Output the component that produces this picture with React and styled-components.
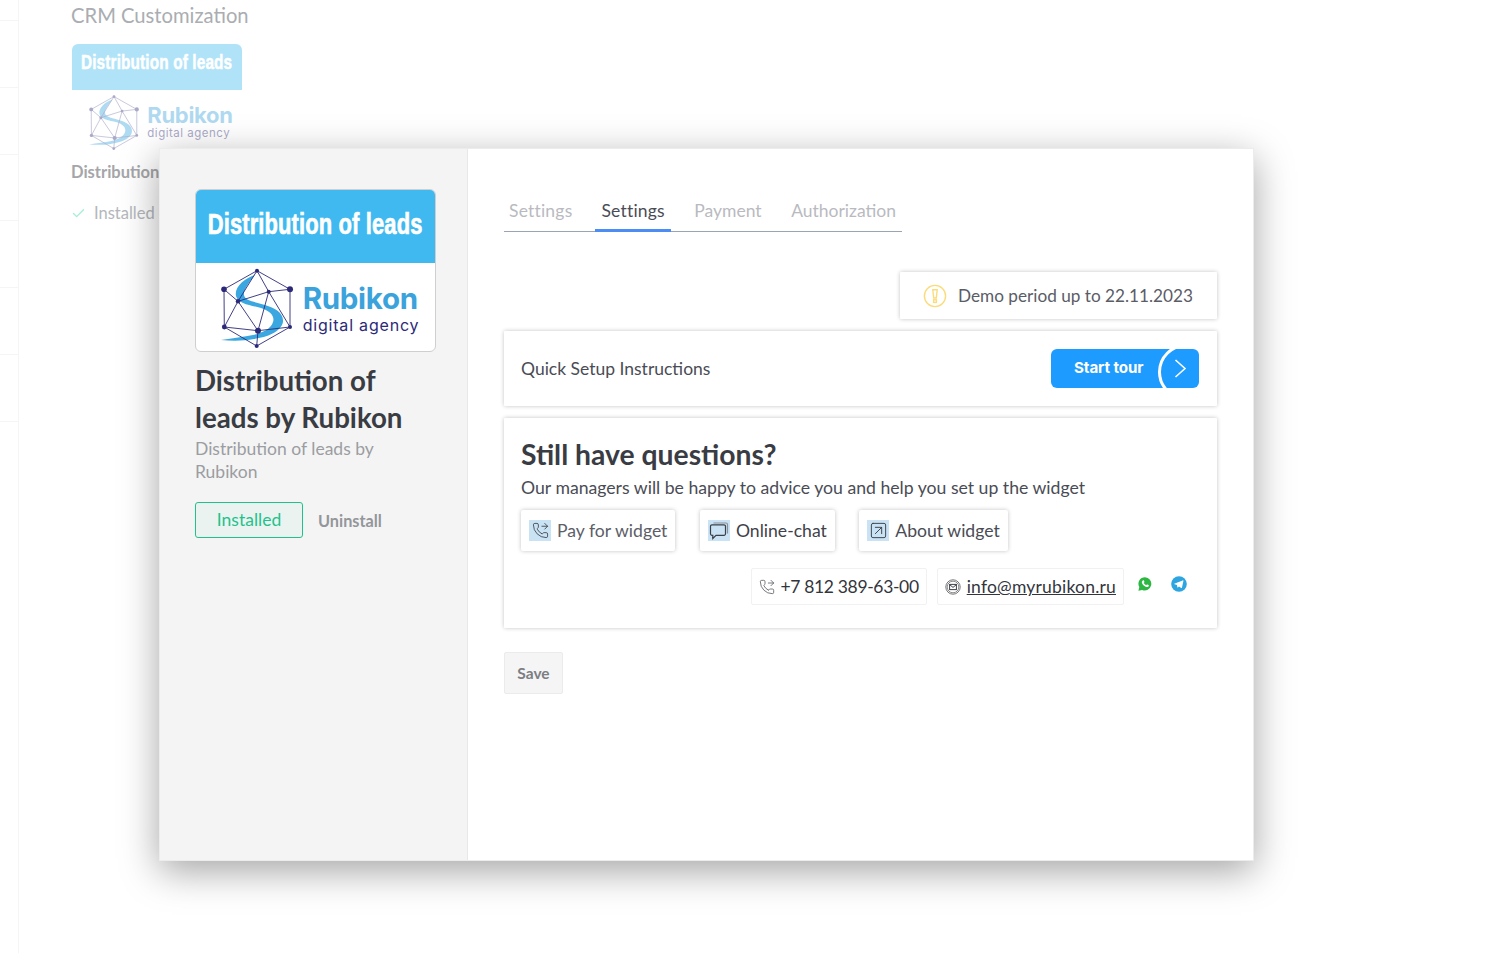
import React from 'react';
import styled, { createGlobalStyle } from 'styled-components';
import { Check, PhoneForwarded, SquareArrowUpRight } from 'lucide-react';

const Global = createGlobalStyle`
  html, body { margin: 0; padding: 0; background: #fff; }
  body { font-family: "Lato", "Noto Sans", sans-serif; color: #4a4c55; overflow: hidden; }
  * { box-sizing: border-box; }
`;

const Page = styled.div`
  position: relative;
  width: 1487px;
  height: 953px;
  display: flex;
  overflow: hidden;
`;

const Rail = styled.div`
  width: 19px;
  height: 100%;
  border-right: 1px solid #f5f5f5;
  padding-top: 20px;
  flex: none;
`;

const RailRow = styled.div`
  height: 66.8px;
  border-top: 1px solid #f5f5f5;
`;

const Backdrop = styled.div`
  padding: 0 0 0 52px;
`;

const PageTitle = styled.h1`
  margin: 2px 0 0;
  font-size: 20.2px;
  font-weight: 400;
  line-height: 26px;
  color: #aaadb2;
`;

const FadedCard = styled.div`
  width: 170px;
  margin: 16px 0 0 1px;
  opacity: 0.4;
`;

const FadedName = styled.div`
  margin-top: 14px;
  font-size: 16.5px;
  font-weight: 700;
  color: #a5a6a9;
  white-space: nowrap;
`;

const FadedStatus = styled.div`
  margin-top: 21px;
  display: flex;
  align-items: center;
  gap: 8px;
  font-size: 16.5px;
  color: #b4b7bc;
  svg { color: #a6eed5; }
`;

const Banner = styled.div`
  height: ${p => p.$h}px;
  padding-bottom: ${p => p.$lift}px;
  background: ${p => p.$bg};
  border-radius: ${p => p.$r}px ${p => p.$r}px 0 0;
  display: flex;
  align-items: center;
  justify-content: center;
  overflow: hidden;
`;

const BannerText = styled.span`
  color: #fff;
  font-family: "Liberation Sans", Arial, sans-serif;
  font-weight: 700;
  font-size: ${p => p.$size}px;
  white-space: nowrap;
  transform: scaleX(0.73);
  -webkit-text-stroke: ${p => p.$stroke}px #fff;
  letter-spacing: 0.2px;
`;

const LogoRow = styled.div`
  display: flex;
  align-items: center;
  justify-content: center;
  gap: ${p => p.$gap}px;
  height: ${p => p.$h}px;
  padding: ${p => p.$top}px 0 0 ${p => p.$left}px;
`;

const LogoWords = styled.div`
  display: flex;
  flex-direction: column;
  gap: ${p => p.$gap}px;
`;

const LogoName = styled.span`
  font-family: "Inter", sans-serif;
  font-weight: 700;
  font-size: ${p => p.$size}px;
  line-height: 0.9;
  color: #3aa3dc;
  letter-spacing: -0.3px;
`;

const LogoTag = styled.span`
  font-family: "Inter", sans-serif;
  font-weight: 400;
  font-size: ${p => p.$size}px;
  line-height: 1;
  letter-spacing: ${p => p.$track}px;
  color: #2c2a78;
  white-space: nowrap;
`;

const Modal = styled.div`
  position: absolute;
  left: 159px;
  top: 148px;
  width: 1095px;
  height: 713px;
  background: #fff;
  display: flex;
  outline: 1px solid #ececec;
  outline-offset: -1px;
  box-shadow: 0 10px 36px rgba(0, 0, 0, 0.36);
`;

const Side = styled.aside`
  width: 309px;
  flex: none;
  background: #f4f4f4;
  border-right: 1px solid #e8e8e8;
  padding: 41px 31px 0 36px;
`;

const WidgetCard = styled.div`
  width: 241px;
  height: 163px;
  background: #fff;
  border: 1px solid #cfcfcf;
  border-radius: 6px;
  overflow: hidden;
`;

const WidgetTitle = styled.h2`
  margin: 10px 0 0;
  font-size: 27.7px;
  font-weight: 700;
  line-height: 37px;
  color: #3a3c44;
`;

const WidgetDesc = styled.p`
  margin: 1px 0 0;
  font-size: 17.5px;
  line-height: 23px;
  color: #9b9da2;
`;

const InstallRow = styled.div`
  margin-top: 19px;
  display: flex;
  align-items: center;
  gap: 15px;
`;

const InstalledBadge = styled.div`
  width: 108px;
  height: 36px;
  border: 1px solid #1fc28c;
  border-radius: 3px;
  background: #ebf3f0;
  color: #1fc28c;
  font-size: 17.5px;
  display: flex;
  align-items: center;
  justify-content: center;
  padding-bottom: 2px;
`;

const Uninstall = styled.span`
  font-size: 16.3px;
  font-weight: 700;
  color: #93969b;
`;

const Main = styled.main`
  flex: 1;
  padding: 40px 37px 0 36px;
`;

const Tabs = styled.div`
  width: 398px;
  height: 44px;
  display: flex;
  gap: 18px;
  border-bottom: 1px solid #9aa4b5;
`;

const Tab = styled.div`
  height: 44px;
  padding: 0 ${p => p.$pad}px;
  font-size: 17.5px;
  line-height: 46px;
  letter-spacing: ${p => p.$track || 0}px;
  white-space: nowrap;
  color: ${p => (p.$active ? '#4a4c55' : '#b9babf')};
  border-bottom: ${p => (p.$active ? '3px solid #4b8cf5' : 'none')};
`;

const DemoRow = styled.div`
  margin-top: 40px;
  display: flex;
  justify-content: flex-end;
`;

const Panel = styled.div`
  background: #fff;
  border-radius: 1px;
  box-shadow: 0 0 4px rgba(0, 0, 0, 0.24);
`;

const DemoBox = styled(Panel)`
  width: 317px;
  height: 47px;
  display: flex;
  align-items: center;
  gap: 11px;
  padding-left: 23px;
  font-size: 17.2px;
  color: #5a5c66;
`;

const SetupBox = styled(Panel)`
  margin-top: 12px;
  height: 75px;
  display: flex;
  align-items: center;
  justify-content: space-between;
  padding: 0 18px 0 17px;
  font-size: 17.5px;
`;

const TourButton = styled.div`
  position: relative;
  width: 148px;
  height: 39px;
  border-radius: 6px;
  background: #1e9bff;
  overflow: hidden;
  color: #fff;
  font-family: "Inter", sans-serif;
  font-weight: 700;
  font-size: 15.2px;
  line-height: 38px;
  padding-left: 23px;
  letter-spacing: -0.1px;
  svg {
    position: absolute;
    right: 12px;
    top: 10px;
  }
  &::after {
    content: '';
    position: absolute;
    left: 107px;
    top: -5px;
    width: 50px;
    height: 50px;
    border: 3px solid #fff;
    border-radius: 50%;
  }
`;

const HelpBox = styled(Panel)`
  margin-top: 12px;
  height: 210px;
  padding: 18px 17px 0;
`;

const HelpTitle = styled.h3`
  margin: 0;
  font-size: 28.3px;
  font-weight: 700;
  line-height: 36px;
  color: #3a3c44;
`;

const HelpText = styled.p`
  margin: 4px 0 0;
  font-size: 17.65px;
  line-height: 24px;
`;

const ActionRow = styled.div`
  margin-top: 10px;
  display: flex;
  gap: 24.5px;
`;

const ActionButton = styled.div`
  height: 41px;
  display: flex;
  align-items: center;
  gap: 6px;
  padding: 0 8px;
  background: #fff;
  border-radius: 2px;
  box-shadow: 0 0 4px rgba(0, 0, 0, 0.24);
  font-size: 17.6px;
  white-space: nowrap;
  color: ${p => p.$color};
`;

const IconTile = styled.span`
  width: 22px;
  height: 21px;
  background: #c9e3f5;
  display: flex;
  align-items: center;
  justify-content: center;
  color: #3c4048;
`;

const ContactRow = styled.div`
  margin-top: 17px;
  display: flex;
  justify-content: flex-end;
  align-items: flex-start;
  padding-right: 13px;
`;

const ContactChip = styled.div`
  height: 37px;
  display: flex;
  align-items: center;
  gap: 6px;
  padding: 0 7px;
  margin-right: 10px;
  border: 1px solid #f1f1f1;
  border-radius: 2px;
  font-size: 17.5px;
  letter-spacing: ${p => p.$track}px;
  color: #33353c;
  white-space: nowrap;
`;

const MailLink = styled.a`
  color: #33353c;
  text-decoration: underline;
`;

const Social = styled.svg`
  width: 16px;
  height: 16px;
  margin: 8px ${p => p.$gap}px 0 ${p => p.$left}px;
  flex: none;
`;

const SaveButton = styled.div`
  margin-top: 24px;
  width: 59px;
  height: 42px;
  background: #f5f5f5;
  border: 1px solid #ebebeb;
  border-radius: 2px;
  color: #7c7e84;
  font-size: 15.5px;
  font-weight: 700;
  display: flex;
  align-items: center;
  justify-content: center;
`;

const nodes = [
  [42, 3.7, 2], [75, 22.3, 3], [75, 60, 2], [41.7, 79, 2], [9.3, 60, 2.4], [9, 22.3, 2.8],
  [23, 34.3, 2.2], [53.7, 24.7, 2], [43, 63.7, 3],
];

// the polygon mark of the Rubikon logo
function RubikonMark({ size }) {
  return (
    <svg width={size} height={size} viewBox="0 0 84 84" fill="none">
      <path
        d="M40 8C30 11 19 20 21 29c2 8 14 9 25 12 9 3 14 8 12 14-2 7-11 11-20 13-9 2-20 3-32 5 11 1 23 1 33-1 13-2 27-7 29-17 1-9-8-14-18-17-9-3-20-4-21-10-1-5 6-14 11-20z"
        fill="#3aa7e0"
      />
      <g stroke="#2c2a78" strokeWidth="0.9">
        <path d="M42 3.7L75 22.3V60L41.7 79L9.3 60L9 22.3Z" />
        <path d="M42 3.7L23 34.3L53.7 24.7L42 3.7M9 22.3L23 34.3L9.3 60M23 34.3L43 63.7L53.7 24.7L75 22.3M53.7 24.7L75 60L43 63.7L9.3 60M43 63.7L41.7 79" />
      </g>
      {nodes.map(([x, y, r]) => (
        <circle key={`${x}-${y}`} cx={x} cy={y} r={r} fill="#2c2a78" />
      ))}
    </svg>
  );
}

function Logo({ h, top, left, gap, mark, name, tag, track, stack }) {
  return (
    <LogoRow $h={h} $top={top} $left={left} $gap={gap}>
      <RubikonMark size={mark} />
      <LogoWords $gap={stack}>
        <LogoName $size={name}>Rubikon</LogoName>
        <LogoTag $size={tag} $track={track}>digital agency</LogoTag>
      </LogoWords>
    </LogoRow>
  );
}

function ChatIcon() {
  return (
    <svg width="20" height="19" viewBox="0 0 20 19" fill="none" stroke="#3c4048" strokeWidth="1.2">
      <path d="M4.500 2h12.500a1.500 1.500 0 0 1 1.500 1.500v9" stroke="#8b9096" />
      <path d="M3 3.800h12a1.500 1.500 0 0 1 1.500 1.500v7.500a1.500 1.500 0 0 1-1.500 1.500H7L3.800 17.500V14.300H3a1.500 1.500 0 0 1-1.500-1.500V5.300A1.500 1.500 0 0 1 3 3.800z" />
    </svg>
  );
}

function WarnIcon() {
  return (
    <svg width="24" height="24" viewBox="0 0 24 24" fill="none" stroke="#fbdc7c" strokeWidth="1.4">
      <circle cx="12" cy="12" r="10.600" />
      <path d="M9.800 5.800h4.400l-.9 8.200h-2.600z" />
      <rect x="10.600" y="15.800" width="2.800" height="2.600" />
    </svg>
  );
}

function MailIcon() {
  return (
    <svg width="16" height="16" viewBox="0 0 16 16" fill="none" stroke="#3c4048" strokeWidth="1">
      <circle cx="8" cy="8" r="7.200" stroke="#777" />
      <circle cx="8" cy="8" r="5.800" strokeWidth="0.6" />
      <rect x="4.600" y="5.400" width="6.800" height="5.200" />
      <path d="M4.600 5.600L8 8.400l3.400-2.800" />
    </svg>
  );
}

function TourChevron() {
  return (
    <svg width="13" height="19" viewBox="0 0 13 19" fill="none" stroke="#fff" strokeWidth="1.6">
      <path d="M1.500 1L11 9.500L1.500 18" />
    </svg>
  );
}

export default function App() {
  return (
    <Page>
      <Global />
      <Rail>
        {[0, 1, 2, 3, 4, 5, 6].map(i => <RailRow key={i} />)}
      </Rail>
      <Backdrop>
        <PageTitle>CRM Customization</PageTitle>
        <FadedCard>
          <Banner $h={46} $lift={10} $bg="#3db9ef" $r={6}>
            <BannerText $size={21} $stroke={0.5}>Distribution of leads</BannerText>
          </Banner>
          <Logo h={58} top={7} left={4} gap={4} mark={58} name={22} tag={11.500} track={0.5} stack={2} />
        </FadedCard>
        <FadedName>Distribution of leads by Rubikon</FadedName>
        <FadedStatus><Check size={15} strokeWidth={2.2} />Installed</FadedStatus>
      </Backdrop>

      <Modal>
        <Side>
          <WidgetCard>
            <Banner $h={73} $lift={6} $bg="#3fb9ef" $r={0}>
              <BannerText $size={30} $stroke={0.7}>Distribution of leads</BannerText>
            </Banner>
            <Logo h={88} top={4} left={3} gap={4} mark={84} name={29.500} tag={16} track={0.8} stack={5} />
          </WidgetCard>
          <WidgetTitle>Distribution of leads by Rubikon</WidgetTitle>
          <WidgetDesc>Distribution of leads by Rubikon</WidgetDesc>
          <InstallRow>
            <InstalledBadge>Installed</InstalledBadge>
            <Uninstall>Uninstall</Uninstall>
          </InstallRow>
        </Side>

        <Main>
          <Tabs>
            <Tab $pad={5} $track={0.2}>Settings</Tab>
            <Tab $pad={6} $track={0.2} $active>Settings</Tab>
            <Tab $pad={5.500}>Payment</Tab>
            <Tab $pad={6}>Authorization</Tab>
          </Tabs>

          <DemoRow>
            <DemoBox><WarnIcon />Demo period up to 22.11.2023</DemoBox>
          </DemoRow>

          <SetupBox>
            Quick Setup Instructions
            <TourButton>
              Start tour
              <TourChevron />
            </TourButton>
          </SetupBox>

          <HelpBox>
            <HelpTitle>Still have questions?</HelpTitle>
            <HelpText>Our managers will be happy to advice you and help you set up the widget</HelpText>
            <ActionRow>
              <ActionButton $color="#5c5e68">
                <IconTile><PhoneForwarded size={17} strokeWidth={1.2} /></IconTile>
                Pay for widget
              </ActionButton>
              <ActionButton $color="#3f414a">
                <IconTile><ChatIcon /></IconTile>
                Online-chat
              </ActionButton>
              <ActionButton $color="#4a4c55">
                <IconTile><SquareArrowUpRight size={19} strokeWidth={1.2} /></IconTile>
                About widget
              </ActionButton>
            </ActionRow>
            <ContactRow>
              <ContactChip $track={-0.35}>
                <PhoneForwarded size={16} strokeWidth={1.2} color="#55585e" />
                +7 812 389-63-00
              </ContactChip>
              <ContactChip $track={0.2}>
                <MailIcon />
                <MailLink href="#">info@myrubikon.ru</MailLink>
              </ContactChip>
              <Social $left={3} $gap={18} viewBox="0 0 16 16">
                <path d="M8 1.200a6.600 6.600 0 0 0-5.700 9.900L1.400 14.800l3.800-.9A6.600 6.600 0 1 0 8 1.200z" fill="#2cb742" />
                <path d="M5.700 4.300c.5-.3 1-.2 1.200.3l.5 1.100c.1.300 0 .6-.3.900l-.3.300c.5 1 1.300 1.800 2.400 2.300l.4-.4c.3-.3.600-.3.900-.2l1 .5c.4.200.5.700.2 1.100-.6.900-1.700 1.100-3 .6-1.700-.6-3.100-2-3.700-3.700-.4-1-.1-1.800.7-2.300z" fill="#fff" />
              </Social>
              <Social $left={0} $gap={0} viewBox="0 0 16 16">
                <circle cx="8" cy="8" r="7.800" fill="#2ca5e0" />
                <path d="M3.200 7.800l8.500-3.400c.5-.2.800.1.700.7l-1.400 6.500c-.1.500-.4.600-.8.400l-2.200-1.600-1.100 1c-.2.200-.4.200-.5 0l-.4-2.400-2.400-.8c-.5-.1-.5-.3-.4-.4z" fill="#fff" />
              </Social>
            </ContactRow>
          </HelpBox>

          <SaveButton>Save</SaveButton>
        </Main>
      </Modal>
    </Page>
  );
}
